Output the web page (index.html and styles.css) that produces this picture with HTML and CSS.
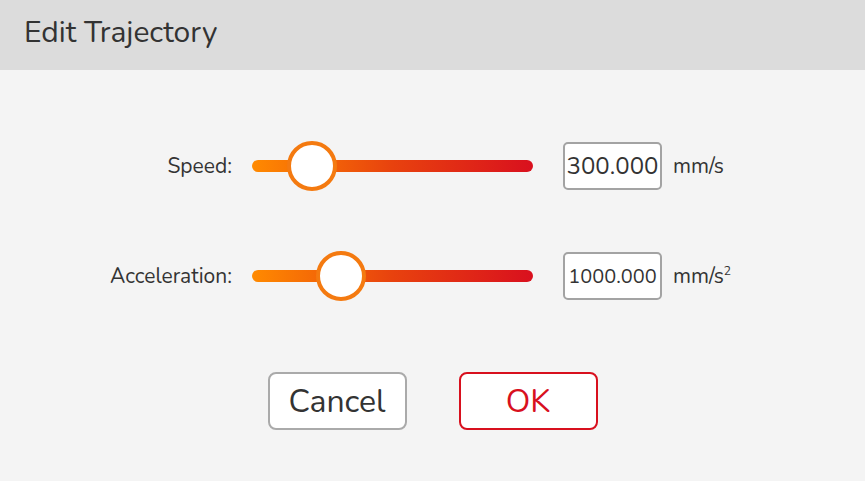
FILE: index.html
```html
<!DOCTYPE html>
<html>
<head>
<meta charset="utf-8">
<link rel="stylesheet" href="styles.css">
</head>
<body>
<div class="dialog">
  <div class="header"><span class="title">Edit Trajectory</span></div>
  <div class="content">
    <div class="form">
      <div class="label">Speed:</div>
      <div class="slider">
        <div class="track"></div>
        <div class="thumb" style="left: 35px"></div>
      </div>
      <div class="field"><span class="value">300.000</span></div>
      <div class="unit">mm/s</div>

      <div class="label">Acceleration:</div>
      <div class="slider">
        <div class="track"></div>
        <div class="thumb" style="left: 64px"></div>
      </div>
      <div class="field"><span class="value small">1000.000</span></div>
      <div class="unit">mm/s<sup>2</sup></div>
    </div>
    <div class="actions">
      <button class="btn cancel">Cancel</button>
      <button class="btn ok">OK</button>
    </div>
  </div>
</div>
</body>
</html>
```
FILE: styles.css
```css
* { box-sizing: border-box; }
html, body { margin: 0; padding: 0; }
body {
  width: 865px;
  height: 481px;
  background: #f4f4f4;
  font-family: "Nunito", Lato, "Open Sans", sans-serif;
  color: #333333;
  overflow: hidden;
}
.header {
  height: 70px;
  background: #dcdcdc;
  display: flex;
  align-items: center;
  padding-left: 24px;
  padding-bottom: 6px;
}
.title {
  font-size: 30px;
  color: #333;
}
.content {
  padding-top: 71px;
}
.form {
  display: grid;
  grid-template-columns: 128px 331px 99px auto;
  grid-auto-rows: 50px;
  row-gap: 60px;
  align-items: center;
  margin-left: 104px;
}
.label {
  justify-self: end;
  white-space: nowrap;
  font-size: 21px;
}
.slider {
  position: relative;
  height: 50px;
  width: 281px;
  margin-left: 20px;
  display: flex;
  align-items: center;
}
.track {
  width: 281px;
  height: 12px;
  border-radius: 6px;
  background: linear-gradient(to right, #ff8a00, #e8420e 50%, #d9101e);
}
.thumb {
  position: absolute;
  top: 0;
  width: 50px;
  height: 50px;
  border-radius: 50%;
  background: #ffffff;
  border: 4px solid #f47a10;
}
.field {
  width: 99px;
  height: 48px;
  background: #fff;
  border: 2px solid #a3a3a3;
  border-radius: 5px;
  display: flex;
  align-items: center;
  justify-content: center;
}
.value { font-size: 24px; }
.value.small { font-size: 20px; }
.unit {
  font-size: 21px;
  margin-left: 11px;
  white-space: nowrap;
}
.unit sup { font-size: 12px; vertical-align: 8px; line-height: 0; }
.actions {
  display: flex;
  justify-content: center;
  gap: 52px;
  margin-top: 71px;
}
.btn {
  width: 139px;
  height: 58px;
  background: #fff;
  border-radius: 8px;
  font-family: "Nunito", Lato, "Open Sans", sans-serif;
  font-size: 32px;
  padding: 0;
}
.btn.cancel { border: 2px solid #aaaaaa; color: #333; }
.btn.ok { border: 2px solid #d8101e; color: #d8101e; }
```
